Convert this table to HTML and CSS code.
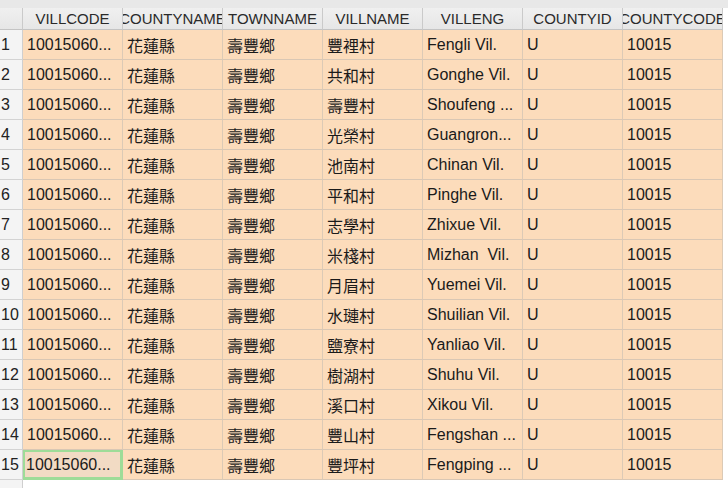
FILE: index.html
```html
<!DOCTYPE html>
<html>
<head>
<meta charset="utf-8">
<link rel="stylesheet" href="styles.css">
</head>
<body>
<div class="topbar"></div>
<div class="table" id="t">
  <div class="hcell corner"></div>
  <div class="hcell"><span>VILLCODE</span></div>
  <div class="hcell"><span>COUNTYNAME</span></div>
  <div class="hcell"><span>TOWNNAME</span></div>
  <div class="hcell"><span>VILLNAME</span></div>
  <div class="hcell"><span>VILLENG</span></div>
  <div class="hcell"><span>COUNTYID</span></div>
  <div class="hcell"><span>COUNTYCODE</span></div>

  <div class="num">1</div><div class="cell">10015060...</div><div class="cell">花蓮縣</div><div class="cell">壽豐鄉</div><div class="cell">豐裡村</div><div class="cell">Fengli Vil.</div><div class="cell">U</div><div class="cell">10015</div>
  <div class="num">2</div><div class="cell">10015060...</div><div class="cell">花蓮縣</div><div class="cell">壽豐鄉</div><div class="cell">共和村</div><div class="cell">Gonghe Vil.</div><div class="cell">U</div><div class="cell">10015</div>
  <div class="num">3</div><div class="cell">10015060...</div><div class="cell">花蓮縣</div><div class="cell">壽豐鄉</div><div class="cell">壽豐村</div><div class="cell">Shoufeng ...</div><div class="cell">U</div><div class="cell">10015</div>
  <div class="num">4</div><div class="cell">10015060...</div><div class="cell">花蓮縣</div><div class="cell">壽豐鄉</div><div class="cell">光榮村</div><div class="cell">Guangron...</div><div class="cell">U</div><div class="cell">10015</div>
  <div class="num">5</div><div class="cell">10015060...</div><div class="cell">花蓮縣</div><div class="cell">壽豐鄉</div><div class="cell">池南村</div><div class="cell">Chinan Vil.</div><div class="cell">U</div><div class="cell">10015</div>
  <div class="num">6</div><div class="cell">10015060...</div><div class="cell">花蓮縣</div><div class="cell">壽豐鄉</div><div class="cell">平和村</div><div class="cell">Pinghe Vil.</div><div class="cell">U</div><div class="cell">10015</div>
  <div class="num">7</div><div class="cell">10015060...</div><div class="cell">花蓮縣</div><div class="cell">壽豐鄉</div><div class="cell">志學村</div><div class="cell">Zhixue Vil.</div><div class="cell">U</div><div class="cell">10015</div>
  <div class="num">8</div><div class="cell">10015060...</div><div class="cell">花蓮縣</div><div class="cell">壽豐鄉</div><div class="cell">米棧村</div><div class="cell">Mizhan &nbsp;Vil.</div><div class="cell">U</div><div class="cell">10015</div>
  <div class="num">9</div><div class="cell">10015060...</div><div class="cell">花蓮縣</div><div class="cell">壽豐鄉</div><div class="cell">月眉村</div><div class="cell">Yuemei Vil.</div><div class="cell">U</div><div class="cell">10015</div>
  <div class="num">10</div><div class="cell">10015060...</div><div class="cell">花蓮縣</div><div class="cell">壽豐鄉</div><div class="cell">水璉村</div><div class="cell">Shuilian Vil.</div><div class="cell">U</div><div class="cell">10015</div>
  <div class="num">11</div><div class="cell">10015060...</div><div class="cell">花蓮縣</div><div class="cell">壽豐鄉</div><div class="cell">鹽寮村</div><div class="cell">Yanliao Vil.</div><div class="cell">U</div><div class="cell">10015</div>
  <div class="num">12</div><div class="cell">10015060...</div><div class="cell">花蓮縣</div><div class="cell">壽豐鄉</div><div class="cell">樹湖村</div><div class="cell">Shuhu Vil.</div><div class="cell">U</div><div class="cell">10015</div>
  <div class="num">13</div><div class="cell">10015060...</div><div class="cell">花蓮縣</div><div class="cell">壽豐鄉</div><div class="cell">溪口村</div><div class="cell">Xikou Vil.</div><div class="cell">U</div><div class="cell">10015</div>
  <div class="num">14</div><div class="cell">10015060...</div><div class="cell">花蓮縣</div><div class="cell">壽豐鄉</div><div class="cell">豐山村</div><div class="cell">Fengshan ...</div><div class="cell">U</div><div class="cell">10015</div>
  <div class="num">15</div><div class="cell selected">10015060...</div><div class="cell">花蓮縣</div><div class="cell">壽豐鄉</div><div class="cell">豐坪村</div><div class="cell">Fengping ...</div><div class="cell">U</div><div class="cell">10015</div>

  <div class="num filler"></div><div class="blank"></div><div class="blank"></div><div class="blank"></div><div class="blank"></div><div class="blank"></div><div class="blank"></div><div class="blank"></div>
</div>
</body>
</html>
```
FILE: styles.css
```css
* { box-sizing: border-box; }
html, body {
  margin: 0;
  padding: 0;
  width: 728px;
  height: 488px;
  overflow: hidden;
  background: #ffffff;
  font-family: "Liberation Sans", "Noto Sans CJK TC", sans-serif;
}
.topbar {
  height: 8px;
  background: #e8e8e8;
}
.table {
  display: grid;
  grid-template-columns: 23px repeat(7, 100px);
  grid-template-rows: 22px repeat(15, 30px) 30px;
  width: 728px;
}
.hcell {
  background: linear-gradient(#f0f0f0, #e6e6e6);
  border-right: 1px solid #cacaca;
  border-bottom: 1px solid #c4c4c4;
  display: flex;
  justify-content: center;
  align-items: center;
  overflow: hidden;
  font-size: 15px;
  color: #2a2a2a;
  white-space: nowrap;
}
.hcell span { flex: none; }
.num {
  background: #f4f4f4;
  border-right: 1px solid #cfcfcf;
  border-bottom: 1px solid #d3d3d3;
  display: flex;
  align-items: center;
  padding-left: 1px;
  font-size: 16px;
  color: #222;
}
.num.filler { border-bottom: none; }
.cell {
  background: #fcdcbb;
  border-right: 1px solid #dccab6;
  border-bottom: 1px solid #d9c7b4;
  display: flex;
  align-items: center;
  padding-left: 4px;
  font-size: 16px;
  color: #1a1a1a;
  white-space: nowrap;
  overflow: hidden;
}
.cell.selected {
  background: #f2dbc4;
  box-shadow: inset 0 0 0 2px #9edc98;
  border-right-color: #9edc98;
  border-bottom-color: #9edc98;
  padding-left: 3px;
}
.blank { background: #ffffff; }
```
